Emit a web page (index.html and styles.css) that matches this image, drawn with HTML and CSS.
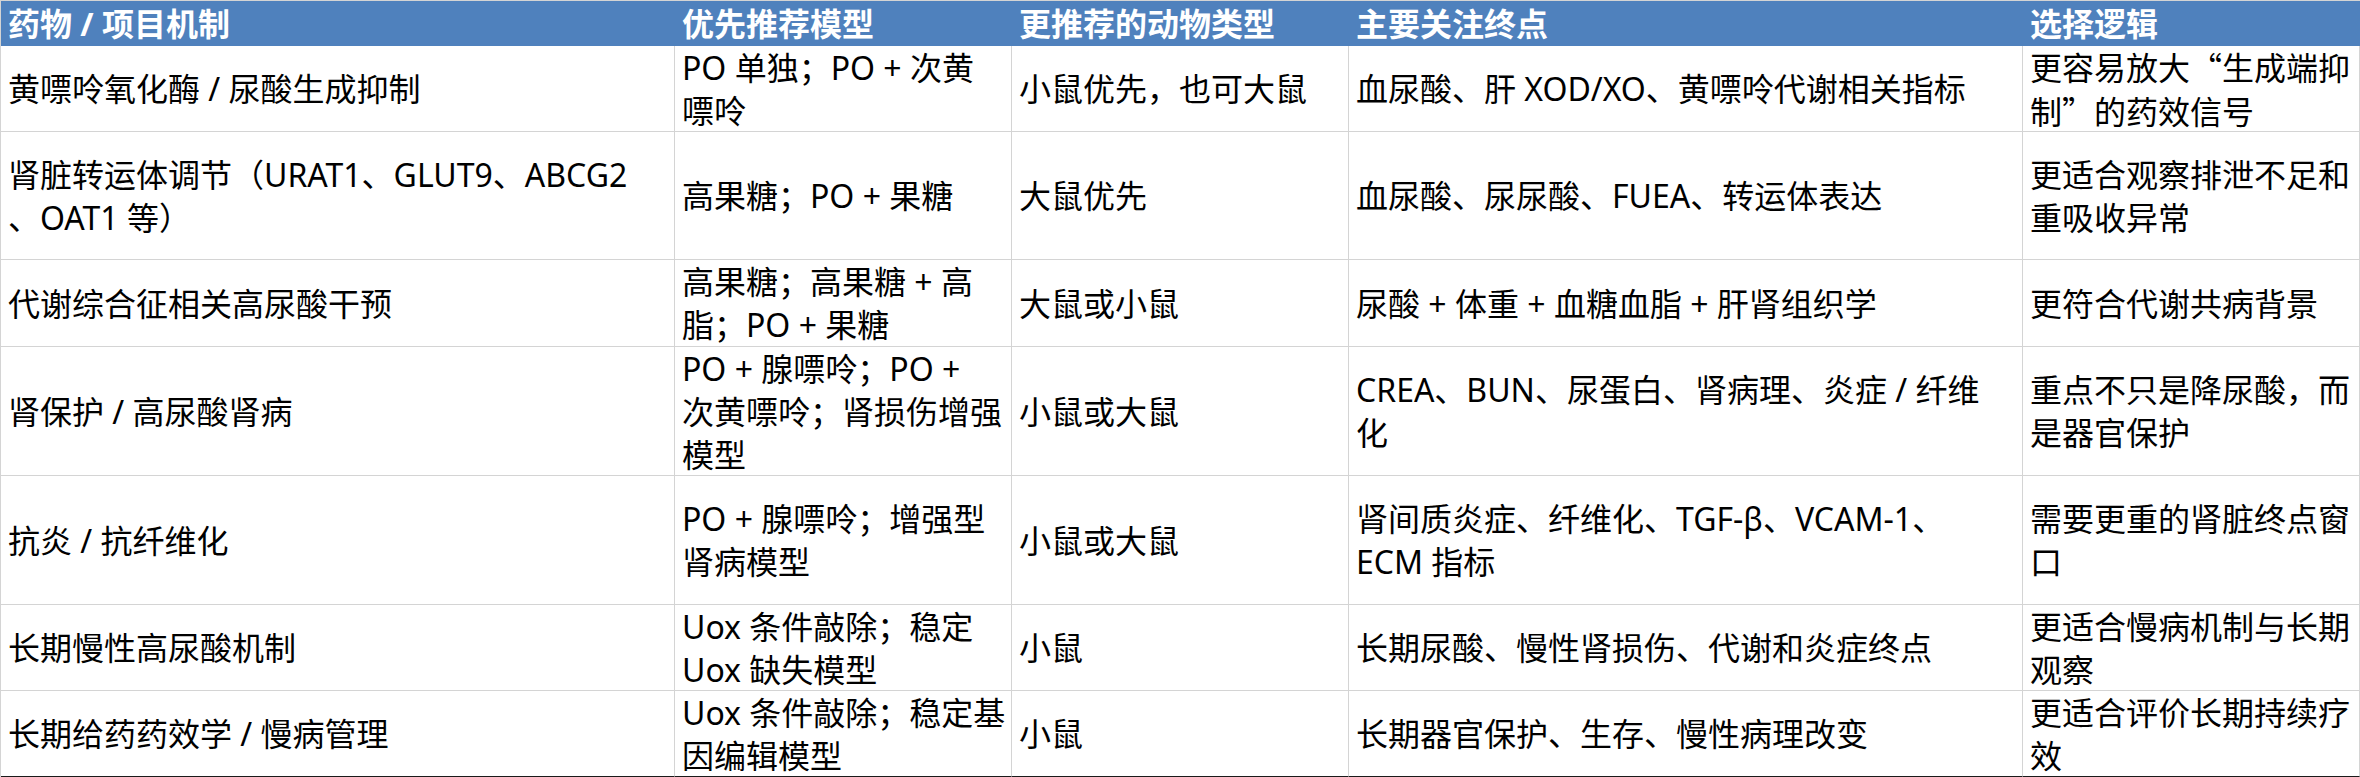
FILE: index.html
```html
<!DOCTYPE html>
<html lang="zh-CN">
<head>
<meta charset="utf-8">
<title>药物 / 项目机制</title>
<link rel="stylesheet" href="styles.css">
</head>
<body>
<div class="sheet">
  <div class="cell head"><span class="t">药物 / 项目机制</span></div>
  <div class="cell head"><span class="t">优先推荐模型</span></div>
  <div class="cell head"><span class="t">更推荐的动物类型</span></div>
  <div class="cell head"><span class="t">主要关注终点</span></div>
  <div class="cell head"><span class="t">选择逻辑</span></div>

  <div class="cell"><span class="t">黄嘌呤氧化酶 / 尿酸生成抑制</span></div>
  <div class="cell"><span class="t">PO 单独；PO + 次黄<br>嘌呤</span></div>
  <div class="cell"><span class="t">小鼠优先，也可大鼠</span></div>
  <div class="cell"><span class="t">血尿酸、肝 XOD/XO、黄嘌呤代谢相关指标</span></div>
  <div class="cell"><span class="t">更容易放大<span class="cjk">“</span>生成端抑<br>制<span class="cjk">”</span>的药效信号</span></div>

  <div class="cell"><span class="t">肾脏转运体调节（URAT1、GLUT9、ABCG2<br>、OAT1 等）</span></div>
  <div class="cell"><span class="t">高果糖；PO + 果糖</span></div>
  <div class="cell"><span class="t">大鼠优先</span></div>
  <div class="cell"><span class="t">血尿酸、尿尿酸、FUEA、转运体表达</span></div>
  <div class="cell"><span class="t">更适合观察排泄不足和<br>重吸收异常</span></div>

  <div class="cell"><span class="t">代谢综合征相关高尿酸干预</span></div>
  <div class="cell"><span class="t">高果糖；高果糖 + 高<br>脂；PO + 果糖</span></div>
  <div class="cell"><span class="t">大鼠或小鼠</span></div>
  <div class="cell"><span class="t">尿酸 + 体重 + 血糖血脂 + 肝肾组织学</span></div>
  <div class="cell"><span class="t">更符合代谢共病背景</span></div>

  <div class="cell"><span class="t">肾保护 / 高尿酸肾病</span></div>
  <div class="cell"><span class="t">PO + 腺嘌呤；PO +<br>次黄嘌呤；肾损伤增强<br>模型</span></div>
  <div class="cell"><span class="t">小鼠或大鼠</span></div>
  <div class="cell"><span class="t">CREA、BUN、尿蛋白、肾病理、炎症 / 纤维<br>化</span></div>
  <div class="cell"><span class="t">重点不只是降尿酸，而<br>是器官保护</span></div>

  <div class="cell"><span class="t">抗炎 / 抗纤维化</span></div>
  <div class="cell"><span class="t">PO + 腺嘌呤；增强型<br>肾病模型</span></div>
  <div class="cell"><span class="t">小鼠或大鼠</span></div>
  <div class="cell"><span class="t">肾间质炎症、纤维化、TGF-β、VCAM-1、<br>ECM 指标</span></div>
  <div class="cell"><span class="t">需要更重的肾脏终点窗<br>口</span></div>

  <div class="cell"><span class="t">长期慢性高尿酸机制</span></div>
  <div class="cell"><span class="t">Uox 条件敲除；稳定<br>Uox 缺失模型</span></div>
  <div class="cell"><span class="t">小鼠</span></div>
  <div class="cell"><span class="t">长期尿酸、慢性肾损伤、代谢和炎症终点</span></div>
  <div class="cell"><span class="t">更适合慢病机制与长期<br>观察</span></div>

  <div class="cell last"><span class="t">长期给药药效学 / 慢病管理</span></div>
  <div class="cell last"><span class="t">Uox 条件敲除；稳定基<br>因编辑模型</span></div>
  <div class="cell last"><span class="t">小鼠</span></div>
  <div class="cell last"><span class="t">长期器官保护、生存、慢性病理改变</span></div>
  <div class="cell last"><span class="t">更适合评价长期持续疗<br>效</span></div>
</div>
</body>
</html>
```

FILE: styles.css
```css
html, body {
  margin: 0;
  padding: 0;
  background: #ffffff;
  overflow: hidden;
}

.sheet {
  display: grid;
  grid-template-columns: 674px 337px 337px 674px 337px;
  grid-template-rows: 45px 86px 128px 87px 129px 129px 86px 86px;
  border-top: 1px solid #d4d4d4;
  border-left: 1px solid #d4d4d4;
  width: 2359px;
  font-family: "Noto Sans", "Noto Sans CJK SC", sans-serif;
  font-size: 32px;
  line-height: 43px;
  color: #000000;
}

.cell {
  box-sizing: border-box;
  display: flex;
  align-items: center;
  padding: 0 0 0 7px;
  border-right: 1px solid #d4d4d4;
  border-bottom: 1px solid #d4d4d4;
  white-space: nowrap;
}

.cell .t {
  display: block;
}

.cjk {
  font-family: "Noto Sans CJK SC", sans-serif;
}

.head {
  background: #4f81bd;
  color: #ffffff;
  font-weight: 700;
  border-right-color: #4f81bd;
  border-bottom: none;
}

.last {
  border-bottom-color: #1a1a1a;
}
```
